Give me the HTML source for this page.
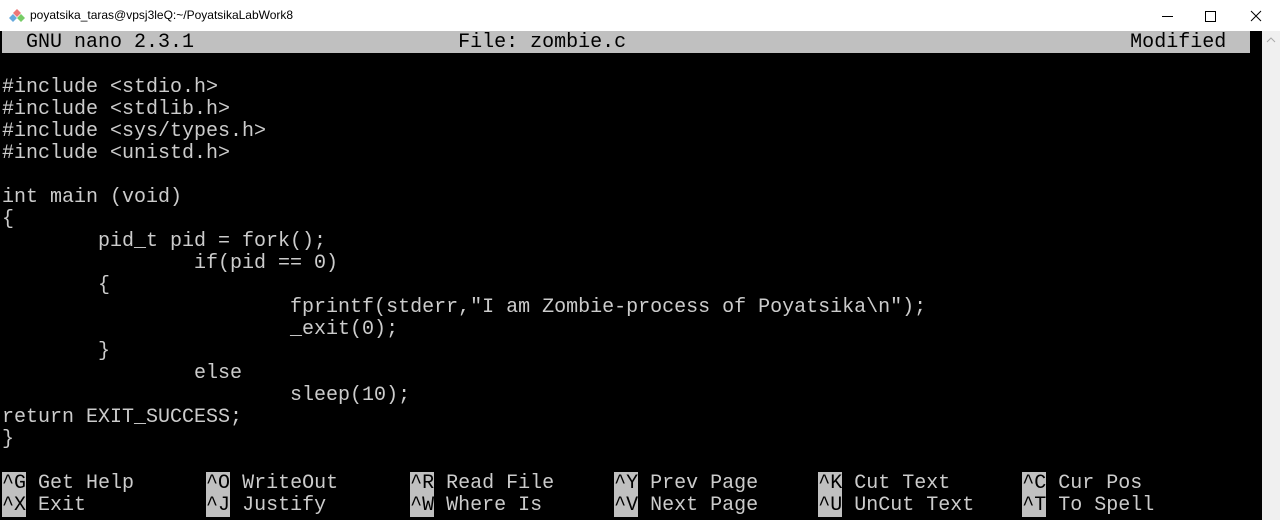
<!DOCTYPE html>
<html><head><style>
body{margin:0;width:1280px;height:520px;background:#000;overflow:hidden;position:relative;font-family:"Liberation Mono",monospace}
#tb{position:absolute;left:0;top:0;width:1280px;height:31px;background:#fff;}
#tb .t{position:absolute;left:30px;top:8px;font:12px "Liberation Sans",sans-serif;color:#000}
#term{position:absolute;left:2px;top:31px;width:1248px;}
.r{height:22px;line-height:22px;font-size:20px;color:#ccc;white-space:pre;position:relative}
.inv{background:#c0c0c0;color:#000;line-height:24px}
.k{background:#c0c0c0;color:#000}
#sb{position:absolute;left:1262px;top:31px;width:18px;height:489px;background:#f0f0f0}
</style></head><body>
<div id="tb">
<svg style="position:absolute;left:9px;top:8px" width="16" height="16" viewBox="0 0 16 16"><path d="M8 1L12 5 8 9 4 5Z" fill="#e77"/><path d="M4 6L8 10 4 14 0 10Z" fill="#6ad"/><path d="M12 6L16 10 12 14 8 10Z" fill="#7c6"/></svg>
<span class="t">poyatsika_taras@vpsj3leQ:~/PoyatsikaLabWork8</span>
<svg style="position:absolute;left:1160px;top:8px" width="110" height="16"><line x1="2" y1="8.5" x2="13" y2="8.5" stroke="#000"/><rect x="45.5" y="3.5" width="10" height="10" fill="none" stroke="#000"/><path d="M91 3L101 13M101 3L91 13" stroke="#000"/></svg>
</div>
<div id="term">
<div class="r inv">  GNU nano 2.3.1                      File: zombie.c                                          Modified  </div>
<div class="r" style="height:24px"> </div>
<div class="r">#include &lt;stdio.h&gt;</div>
<div class="r">#include &lt;stdlib.h&gt;</div>
<div class="r">#include &lt;sys/types.h&gt;</div>
<div class="r">#include &lt;unistd.h&gt;</div>
<div class="r"> </div>
<div class="r">int main (void)</div>
<div class="r">{</div>
<div class="r">        pid_t pid = fork();</div>
<div class="r">                if(pid == 0)</div>
<div class="r">        {</div>
<div class="r">                        fprintf(stderr,"I am Zombie-process of Poyatsika\n");</div>
<div class="r">                        _exit(0);</div>
<div class="r">        }</div>
<div class="r">                else</div>
<div class="r">                        sleep(10);</div>
<div class="r">return EXIT_SUCCESS;</div>
<div class="r">}</div>
<div class="r"> </div>
<div class="r"><span class="k">^G</span> Get Help      <span class="k">^O</span> WriteOut      <span class="k">^R</span> Read File     <span class="k">^Y</span> Prev Page     <span class="k">^K</span> Cut Text      <span class="k">^C</span> Cur Pos</div>
<div class="r"><span class="k">^X</span> Exit          <span class="k">^J</span> Justify       <span class="k">^W</span> Where Is      <span class="k">^V</span> Next Page     <span class="k">^U</span> UnCut Text    <span class="k">^T</span> To Spell</div>
</div>
<div id="sb"><svg width="18" height="18"><path d="M5 11L9 7 13 11" fill="none" stroke="#aaa"/></svg></div>
</body></html>
